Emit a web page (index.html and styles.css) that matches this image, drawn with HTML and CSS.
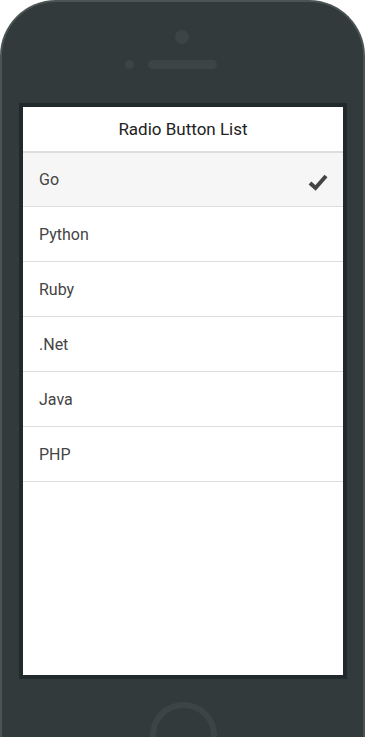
FILE: index.html
```html
<!DOCTYPE html>
<html lang="en">
<head>
    <meta charset="UTF-8">
    <meta name="viewport" content="width=device-width,initial-scale=1.0">
    <title>Radio Button List</title>
    <link rel="stylesheet" href="styles.css">
</head>
<body>
    <div class="phone">
        <div class="phone-top">
            <div class="camera"></div>
            <div class="speaker-row">
                <div class="sensor"></div>
                <div class="speaker"></div>
            </div>
        </div>

        <div class="screen">
            <div class="bar">Radio Button List</div>
            <ul class="list">
                <li class="item selected">
                    <span>Go</span>
                    <svg class="check" width="22" height="20" viewBox="0 0 22 20">
                        <polyline points="3,11 8.5,16 19,4" fill="none" stroke="#444" stroke-width="4"/>
                    </svg>
                </li>
                <li class="item"><span>Python</span></li>
                <li class="item"><span>Ruby</span></li>
                <li class="item"><span>.Net</span></li>
                <li class="item"><span>Java</span></li>
                <li class="item"><span>PHP</span></li>
            </ul>
        </div>

        <div class="phone-bottom">
            <div class="home"></div>
        </div>
    </div>
</body>
</html>
```

FILE: styles.css
```css
html, body {
    margin: 0;
    padding: 0;
    background-color: #fff;
    overflow: hidden;
}
body {
    font-family: Roboto, 'Noto Sans', sans-serif;
    height: 737px;
}
.phone {
    width: 361px;
    height: 760px;
    background-color: #323a3b;
    border: 2px solid #4b5454;
    border-bottom: none;
    border-radius: 56px 56px 0 0;
}
.phone-top {
    height: 101px;
    display: flex;
    flex-direction: column;
    align-items: center;
}
.camera {
    width: 14px;
    height: 14px;
    border-radius: 50%;
    background-color: #3c4546;
    margin-top: 28px;
    margin-left: -1px;
}
.speaker-row {
    display: flex;
    align-items: center;
    margin-top: 16px;
    margin-left: -23px;
}
.sensor {
    width: 9px;
    height: 9px;
    border-radius: 50%;
    background-color: #3c4546;
}
.speaker {
    width: 69px;
    height: 9px;
    border-radius: 5px;
    background-color: #3c4546;
    margin-left: 14px;
}
.screen {
    width: 320px;
    height: 568px;
    margin-left: 17px;
    border: 4px solid #22292c;
    background-color: #fff;
}
.bar {
    height: 44px;
    line-height: 44px;
    text-align: center;
    font-size: 17px;
    color: #222;
    border-bottom: 2px solid #dedede;
}
.list {
    list-style: none;
    margin: 0;
    padding: 0;
}
.item {
    height: 54px;
    display: flex;
    align-items: center;
    justify-content: space-between;
    padding: 0 14px 0 16px;
    font-size: 16px;
    color: #444;
    border-bottom: 1px solid #ddd;
}
.item.selected {
    background-color: #f6f6f6;
    height: 53px;
}
.check {
    margin-top: 4px;
}
.phone-bottom {
    display: flex;
    justify-content: center;
    padding-top: 23px;
}
.home {
    width: 55px;
    height: 55px;
    border: 6px solid #3c4546;
    border-radius: 50%;
    margin-left: 2px;
}
```
